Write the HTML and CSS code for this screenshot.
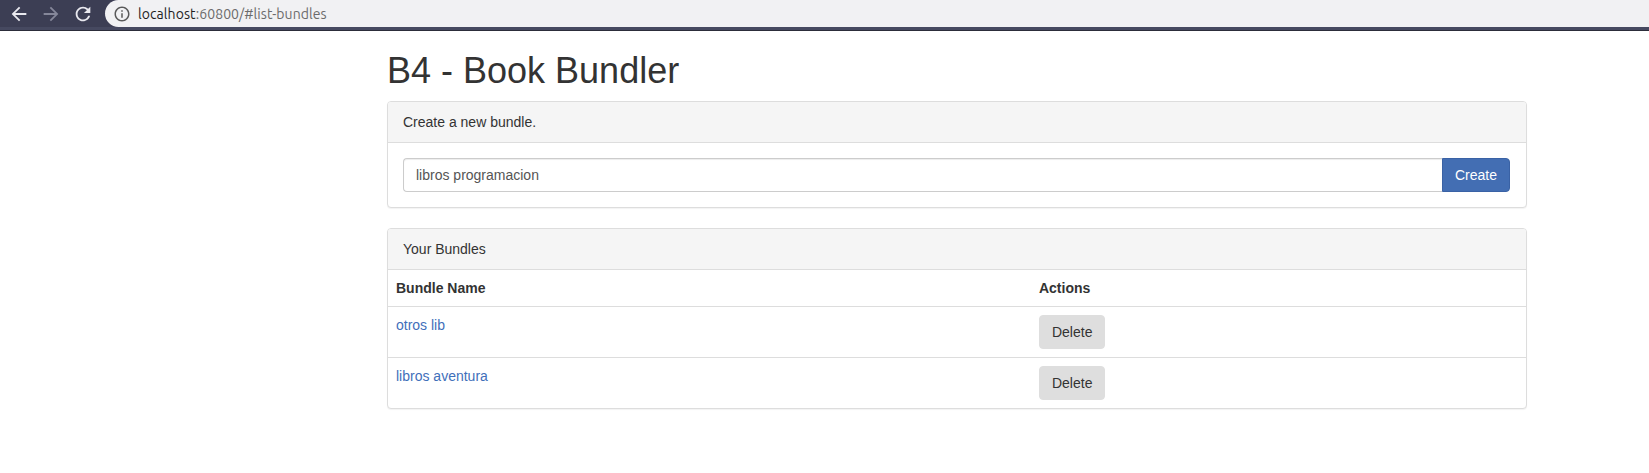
FILE: index.html
```html
<!DOCTYPE html>
<html lang="en">
<head>
<meta charset="utf-8">
<title>B4 - Book Bundler</title>
<link rel="stylesheet" href="styles.css">
</head>
<body>
<div class="chrome">
  <div class="chrome-bar">
    <div class="nav">
      <svg class="nav-icon" viewBox="0 0 24 24"><path d="M20 11H7.83l5.59-5.59L12 4l-8 8 8 8 1.41-1.41L7.83 13H20v-2z"/></svg>
      <svg class="nav-icon dim" viewBox="0 0 24 24"><path d="M12 4l-1.41 1.41L16.17 11H4v2h12.17l-5.58 5.59L12 20l8-8z"/></svg>
      <svg class="nav-icon" viewBox="0 0 24 24"><path d="M17.65 6.35A7.958 7.958 0 0 0 12 4c-4.42 0-7.99 3.58-7.99 8s3.57 8 7.99 8c3.73 0 6.84-2.55 7.73-6h-2.08A5.99 5.99 0 0 1 12 18c-3.31 0-6-2.69-6-6s2.69-6 6-6c1.66 0 3.14.69 4.22 1.78L13 11h7V4l-2.35 2.35z"/></svg>
    </div>
    <div class="omnibox">
      <svg class="info-icon" viewBox="0 0 24 24"><path d="M11 7h2v2h-2zm0 4h2v6h-2zm1-9C6.48 2 2 6.48 2 12s4.48 10 10 10 10-4.48 10-10S17.52 2 12 2zm0 18c-4.41 0-8-3.590-8-8s3.59-8 8-8 8 3.59 8 8-3.59 8-8 8z"/></svg>
      <span class="url"><span class="host">localhost</span>:60800/#list-bundles</span>
    </div>
  </div>
  <div class="chrome-line"></div>
</div>

<div class="container">
  <h1 class="title">B4 - Book Bundler</h1>

  <div class="panel">
    <div class="panel-heading">Create a new bundle.</div>
    <div class="panel-body">
      <div class="input-group">
        <input class="form-control" type="text" value="libros programacion">
        <button class="btn btn-primary" type="button">Create</button>
      </div>
    </div>
  </div>

  <div class="panel">
    <div class="panel-heading">Your Bundles</div>
    <table class="table">
      <thead>
        <tr><th class="col-name">Bundle Name</th><th>Actions</th></tr>
      </thead>
      <tbody>
        <tr>
          <td><a href="#view-bundle/1">otros lib</a></td>
          <td><button class="btn btn-delete" type="button">Delete</button></td>
        </tr>
        <tr>
          <td><a href="#view-bundle/2">libros aventura</a></td>
          <td><button class="btn btn-delete" type="button">Delete</button></td>
        </tr>
      </tbody>
    </table>
  </div>
</div>
</body>
</html>
```

FILE: styles.css
```css
* { box-sizing: border-box; }

html, body {
  margin: 0;
  padding: 0;
  background: #fff;
}

body {
  font-family: "Liberation Sans", Arial, Helvetica, sans-serif;
  font-size: 14px;
  line-height: 1.42857143;
  color: #333;
}

/* ---------- browser chrome ---------- */
.chrome {
  width: 100%;
}

.chrome-bar {
  display: flex;
  height: 27px;
  background: #3c3e54;
}

.nav {
  display: flex;
  align-items: center;
  width: 105px;
  padding-left: 8px;
  gap: 10px;
}

.nav-icon {
  width: 22px;
  height: 22px;
  fill: #e9e9ef;
}

.nav-icon.dim {
  fill: #85879a;
}

.omnibox {
  flex: 1;
  display: flex;
  align-items: center;
  background: #f1f1f3;
  border-radius: 14px 0 0 14px;
  padding-left: 8px;
  gap: 7px;
}

.info-icon {
  width: 18px;
  height: 18px;
  fill: #5a5a5a;
}

.url {
  font-family: "Ubuntu", "Noto Sans", "DejaVu Sans", sans-serif;
  font-size: 14px;
  color: #6b6b6b;
  letter-spacing: 0.08px;
  padding-top: 1px;
}

.host {
  color: #1f1f1f;
}

.chrome-line {
  height: 4px;
  background: #464960;
  border-bottom: 1px solid #2c2d3a;
}

/* ---------- page ---------- */
.container {
  width: 1170px;
  margin-left: 372px;
  padding: 0 15px;
}

.title {
  font-family: inherit;
  font-weight: 500;
  font-size: 36px;
  line-height: 1.1;
  margin: 20px 0 10px;
  color: #333;
}

.panel {
  background: #fff;
  border: 1px solid #ddd;
  border-radius: 4px;
  box-shadow: 0 1px 1px rgba(0, 0, 0, 0.05);
  margin-bottom: 20px;
  overflow: hidden;
}

.panel-heading {
  padding: 10px 15px;
  background: #f5f5f5;
  border-bottom: 1px solid #ddd;
  color: #333;
}

.panel-body {
  padding: 15px;
}

.input-group {
  display: flex;
}

.form-control {
  flex: 1;
  height: 34px;
  padding: 6px 12px;
  font-family: inherit;
  font-size: 14px;
  line-height: 1.42857143;
  color: #555;
  background: #fff;
  border: 1px solid #ccc;
  border-right: 0;
  border-radius: 4px 0 0 4px;
  box-shadow: inset 0 1px 1px rgba(0, 0, 0, 0.075);
  outline: none;
}

.btn {
  display: inline-block;
  height: 34px;
  padding: 6px 12px;
  font-family: inherit;
  font-size: 14px;
  line-height: 1.42857143;
  border: 1px solid transparent;
  border-radius: 4px;
  cursor: pointer;
}

.btn-primary {
  color: #fff;
  background: #436eb3;
  border-color: #3a62a5;
  border-radius: 0 4px 4px 0;
  margin-right: 1px;
}

.btn-delete {
  color: #333;
  background: #dedede;
  border-color: #dedede;
}

.table {
  width: 100%;
  border-collapse: collapse;
  border-spacing: 0;
}

.table th,
.table td {
  padding: 8px;
  line-height: 1.42857143;
  text-align: left;
  vertical-align: top;
}

.table th {
  font-weight: bold;
  border-bottom: 1px solid #ddd;
}

.table .col-name {
  width: 56.5%;
}

.table tbody tr + tr td {
  border-top: 1px solid #ddd;
}

.table a {
  color: #3f6fba;
  text-decoration: none;
}
```
